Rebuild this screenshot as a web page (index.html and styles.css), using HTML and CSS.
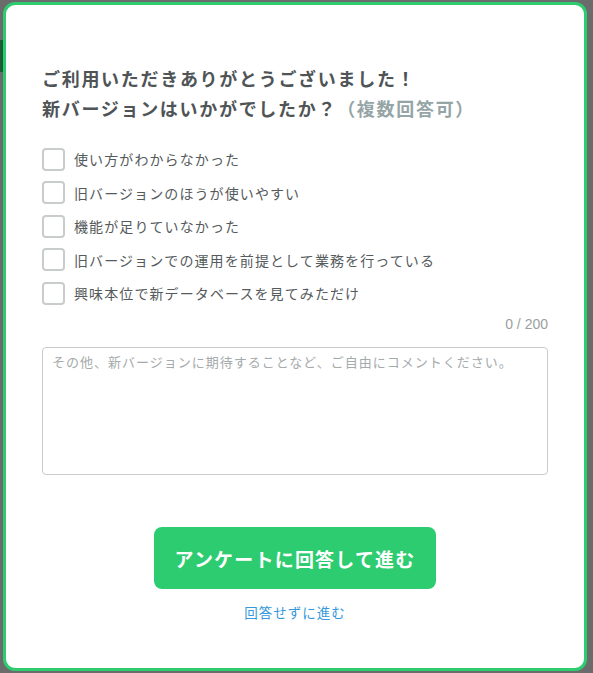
FILE: index.html
```html
<!DOCTYPE html>
<html lang="ja">
<head>
<meta charset="utf-8">
<link rel="stylesheet" href="styles.css">
</head>
<body>
<div class="backdrop-tab"></div>
<div class="modal">
  <h2 class="title">ご利用いただきありがとうございました！<br>新バージョンはいかがでしたか？<span class="note">（複数回答可）</span></h2>
  <ul class="options">
    <li class="option"><span class="box"></span><span class="label">使い方がわからなかった</span></li>
    <li class="option"><span class="box"></span><span class="label">旧バージョンのほうが使いやすい</span></li>
    <li class="option"><span class="box"></span><span class="label">機能が足りていなかった</span></li>
    <li class="option"><span class="box"></span><span class="label">旧バージョンでの運用を前提として業務を行っている</span></li>
    <li class="option"><span class="box"></span><span class="label">興味本位で新データベースを見てみただけ</span></li>
  </ul>
  <div class="counter">0 / 200</div>
  <div class="comment">その他、新バージョンに期待することなど、ご自由にコメントください。</div>
  <div class="actions">
    <button class="submit">アンケートに回答して進む</button>
    <a class="skip">回答せずに進む</a>
  </div>
</div>
</body>
</html>
```
FILE: styles.css
```css
html, body {
  margin: 0;
  padding: 0;
}
body {
  background: #6b6b6b;
  width: 593px;
  height: 673px;
  overflow: hidden;
  font-family: "Noto Sans CJK JP", "Noto Sans", sans-serif;
  position: relative;
}
.backdrop-tab {
  position: absolute;
  left: 0;
  top: 40px;
  width: 3px;
  height: 32px;
  background: #1d5a37;
}
.modal {
  position: relative;
  box-sizing: border-box;
  margin: 2px 0 0 3px;
  width: 584px;
  height: 669px;
  background: #fff;
  border: 3px solid #2ecc71;
  border-radius: 12px;
  padding: 58px 36px 0 36px;
}
.title {
  margin: 0;
  font-size: 18px;
  line-height: 30px;
  font-weight: bold;
  letter-spacing: 1.7px;
  color: #4f5456;
}
.note {
  color: #95a5a6;
}
.options {
  list-style: none;
  margin: 25px 0 0 0;
  padding: 0;
  display: flex;
  flex-direction: column;
  gap: 11.5px;
}
.option {
  display: flex;
  align-items: center;
  gap: 9px;
  height: 22px;
}
.box {
  box-sizing: border-box;
  width: 23px;
  height: 23px;
  border: 2px solid #c8cccd;
  border-radius: 4px;
  flex: none;
}
.label {
  font-size: 14px;
  letter-spacing: 1.1px;
  color: #555a5c;
}
.counter {
  margin-top: 11px;
  text-align: right;
  font-family: "Liberation Sans", sans-serif;
  font-size: 14px;
  line-height: 18px;
  color: #9aa0a2;
}
.comment {
  box-sizing: border-box;
  margin-top: 14px;
  width: 506px;
  height: 128px;
  border: 1px solid #c8cccd;
  border-radius: 4px;
  padding: 4px 9px;
  font-size: 13px;
  line-height: 20px;
  letter-spacing: 1px;
  color: #a5aaac;
}
.actions {
  display: flex;
  flex-direction: column;
  align-items: center;
  width: 506px;
  margin-top: 52px;
}
.submit {
  width: 282px;
  height: 62px;
  border: none;
  border-radius: 8px;
  background: #2ecc71;
  color: #fff;
  font-family: "Noto Sans CJK JP", sans-serif;
  font-size: 19px;
  font-weight: bold;
  letter-spacing: 1.2px;
  padding: 0;
}
.skip {
  margin-top: 13px;
  font-size: 13.5px;
  line-height: 20px;
  letter-spacing: 1px;
  color: #3498db;
  cursor: pointer;
}
```
